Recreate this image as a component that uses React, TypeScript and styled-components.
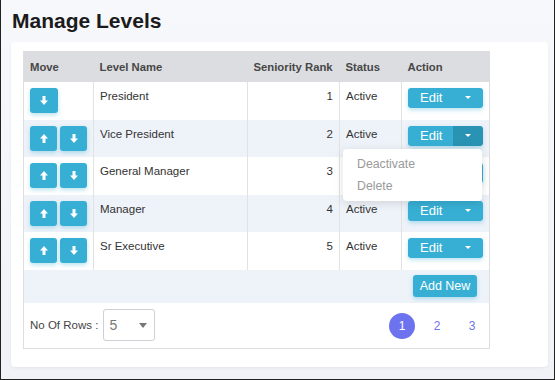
import React from "react";
import styled, { createGlobalStyle } from "styled-components";

const GlobalStyle = createGlobalStyle`
  html, body { margin: 0; padding: 0; }
  body { font-family: "Liberation Sans", Arial, sans-serif; color: #333; }
  * { box-sizing: border-box; }
`;

const Frame = styled.div`
  width: 555px;
  height: 380px;
  border: 1px solid #222;
  border-top: none;
  background: linear-gradient(180deg, #f7f8fb 0%, #f1f2f7 100%);
  padding: 0 6px 0 10px;
  display: flex;
  flex-direction: column;
  overflow: hidden;
`;

const Title = styled.h1`
  margin: 0;
  padding: 9px 0 0 1px;
  height: 42px;
  font-size: 21px;
  font-weight: bold;
  color: #1b1b1b;
  line-height: 24px;
`;

const Card = styled.div`
  background: #fff;
  border-radius: 4px;
  box-shadow: 0 1px 3px rgba(0, 0, 0, 0.06);
  width: 537px;
  height: 325px;
  padding: 9px 12px;
`;

const Table = styled.table`
  width: 466px;
  table-layout: fixed;
  border-collapse: collapse;
  border: 1px solid #dedede;
  font-size: 11.5px;
`;

const HeadCell = styled.th<{ $align?: string }>`
  background: #dcdde1;
  color: #474747;
  font-size: 11.3px;
  font-weight: bold;
  text-align: ${(p) => p.$align || "left"};
  padding: 0 6px;
  height: 30px;
  vertical-align: middle;
`;

const Row = styled.tr<{ $alt?: boolean }>`
  background: ${(p) => (p.$alt ? "#eef2f9" : "#fff")};
  height: ${(p) => (p.$alt ? "37px" : "38px")};
`;

const Cell = styled.td<{ $align?: string }>`
  border-left: 1px solid #e2e2e2;
  padding: 6px 6px;
  vertical-align: top;
  line-height: 17px;
  text-align: ${(p) => p.$align || "left"};
  color: #333;
  &:first-child { border-left: none; }
`;

const ActionCell = styled(Cell)`
  padding-left: 6px;
`;

const MoveGroup = styled.div`
  display: flex;
  gap: 3px;
`;

const MoveButton = styled.button`
  width: 28px;
  height: 25px;
  border: none;
  border-radius: 3px;
  background: #37afd4;
  box-shadow: 0 2px 4px rgba(55, 175, 212, 0.35);
  display: flex;
  align-items: center;
  justify-content: center;
  padding: 0;
`;

const SplitWrap = styled.div`
  position: relative;
  display: flex;
  width: 75px;
  height: 20px;
  border-radius: 3px;
  box-shadow: 0 2px 4px rgba(55, 175, 212, 0.35);
`;

const EditMain = styled.button`
  width: 45px;
  height: 20px;
  border: none;
  border-radius: 3px 0 0 3px;
  background: #37afd4;
  color: #fff;
  font-family: "Liberation Sans", Arial, sans-serif;
  font-size: 13px;
  text-align: left;
  padding: 0 0 0 12px;
`;

const EditCaret = styled.button<{ $open?: boolean }>`
  width: 30px;
  height: 20px;
  border: none;
  border-radius: 0 3px 3px 0;
  background: ${(p) => (p.$open ? "#2a93b3" : "#37afd4")};
  display: flex;
  align-items: center;
  justify-content: center;
  padding: 0 0 1px 0;
`;

const Menu = styled.ul`
  position: absolute;
  right: 1px;
  top: 23px;
  width: 139px;
  margin: 0;
  padding: 4px 0;
  list-style: none;
  background: #fff;
  border-radius: 4px;
  box-shadow: 0 2px 10px rgba(0, 0, 0, 0.13);
  z-index: 5;
`;

const MenuItem = styled.li`
  padding: 0 14px;
  line-height: 22px;
  font-size: 12.3px;
  color: #9a9a9a;
`;

const AddRow = styled.tr`
  background: #eef2f9;
  height: 33px;
`;

const AddCell = styled.td`
  text-align: right;
  padding: 5px 12px 5px 0;
  vertical-align: top;
`;

const AddButton = styled.button`
  height: 22px;
  width: 64px;
  border: none;
  border-radius: 3px;
  background: #37afd4;
  color: #fff;
  font-family: "Liberation Sans", Arial, sans-serif;
  font-size: 12.5px;
  padding: 0;
  box-shadow: 0 2px 4px rgba(55, 175, 212, 0.35);
`;

const FooterCell = styled.td`
  height: 46px;
  padding: 0 4px 0 6px;
  background: #fff;
`;

const Footer = styled.div`
  display: flex;
  align-items: center;
  justify-content: space-between;
`;

const RowsLabel = styled.label`
  display: flex;
  align-items: center;
  gap: 5px;
  color: #444;
  font-size: 11.5px;
`;

const SelectBox = styled.div`
  width: 52px;
  height: 32px;
  border: 1px solid #cfcfd6;
  border-radius: 3px;
  display: flex;
  align-items: center;
  justify-content: space-between;
  padding: 0 7px 0 5px;
  font-size: 14px;
  color: #777;
`;

const Pager = styled.div`
  display: flex;
  align-items: center;
  gap: 9px;
  margin-top: 1px;
`;

const PageItem = styled.span<{ $active?: boolean }>`
  width: 26px;
  height: 26px;
  border-radius: 50%;
  display: flex;
  align-items: center;
  justify-content: center;
  font-size: 12px;
  color: ${(p) => (p.$active ? "#fff" : "#6f74ee")};
  background: ${(p) => (p.$active ? "#6d73ef" : "transparent")};
`;

const Arrow = ({ up }: { up?: boolean }) => (
  <svg width="8" height="9" viewBox="0 0 8 9" style={up ? undefined : { transform: "rotate(180deg)" }}>
    <path d="M4 0 L8 4.4 H5.5 V9 H2.5 V4.4 H0 Z" fill="#fff" />
  </svg>
);

const Caret = ({ color = "#fff", w = 6, h = 3 }: { color?: string; w?: number; h?: number }) => (
  <svg width={w} height={h} viewBox={`0 0 ${w} ${h}`}>
    <path d={`M0 0 H${w} L${w / 2} ${h} Z`} fill={color} />
  </svg>
);

const levels = [
  { name: "President", rank: 1, status: "Active" },
  { name: "Vice President", rank: 2, status: "Active" },
  { name: "General Manager", rank: 3, status: "Active" },
  { name: "Manager", rank: 4, status: "Active" },
  { name: "Sr Executive", rank: 5, status: "Active" },
];

export default function App() {
  return (
    <>
      <GlobalStyle />
      <Frame>
        <Title>Manage Levels</Title>
        <Card>
          <Table>
            <colgroup>
              <col style={{ width: 70 }} />
              <col style={{ width: 154 }} />
              <col style={{ width: 92 }} />
              <col style={{ width: 62 }} />
              <col style={{ width: 88 }} />
            </colgroup>
            <thead>
              <tr>
                <HeadCell>Move</HeadCell>
                <HeadCell>Level Name</HeadCell>
                <HeadCell>Seniority Rank</HeadCell>
                <HeadCell>Status</HeadCell>
                <HeadCell>Action</HeadCell>
              </tr>
            </thead>
            <tbody>
              {levels.map((l, i) => (
                <Row key={l.name} $alt={i % 2 === 1}>
                  <Cell>
                    <MoveGroup>
                      {i > 0 && (
                        <MoveButton>
                          <Arrow up />
                        </MoveButton>
                      )}
                      <MoveButton>
                        <Arrow />
                      </MoveButton>
                    </MoveGroup>
                  </Cell>
                  <Cell>{l.name}</Cell>
                  <Cell $align="right">{l.rank}</Cell>
                  <Cell>{l.status}</Cell>
                  <ActionCell>
                    <SplitWrap>
                      <EditMain>Edit</EditMain>
                      <EditCaret $open={i === 1}>
                        <Caret />
                      </EditCaret>
                      {i === 1 && (
                        <Menu>
                          <MenuItem>Deactivate</MenuItem>
                          <MenuItem>Delete</MenuItem>
                        </Menu>
                      )}
                    </SplitWrap>
                  </ActionCell>
                </Row>
              ))}
              <AddRow>
                <AddCell colSpan={5}>
                  <AddButton>Add New</AddButton>
                </AddCell>
              </AddRow>
              <tr>
                <FooterCell colSpan={5}>
                  <Footer>
                    <RowsLabel>
                      No Of Rows :
                      <SelectBox>
                        <span>5</span>
                        <Caret color="#777" w={8} h={5} />
                      </SelectBox>
                    </RowsLabel>
                    <Pager>
                      <PageItem $active>1</PageItem>
                      <PageItem>2</PageItem>
                      <PageItem>3</PageItem>
                    </Pager>
                  </Footer>
                </FooterCell>
              </tr>
            </tbody>
          </Table>
        </Card>
      </Frame>
    </>
  );
}
